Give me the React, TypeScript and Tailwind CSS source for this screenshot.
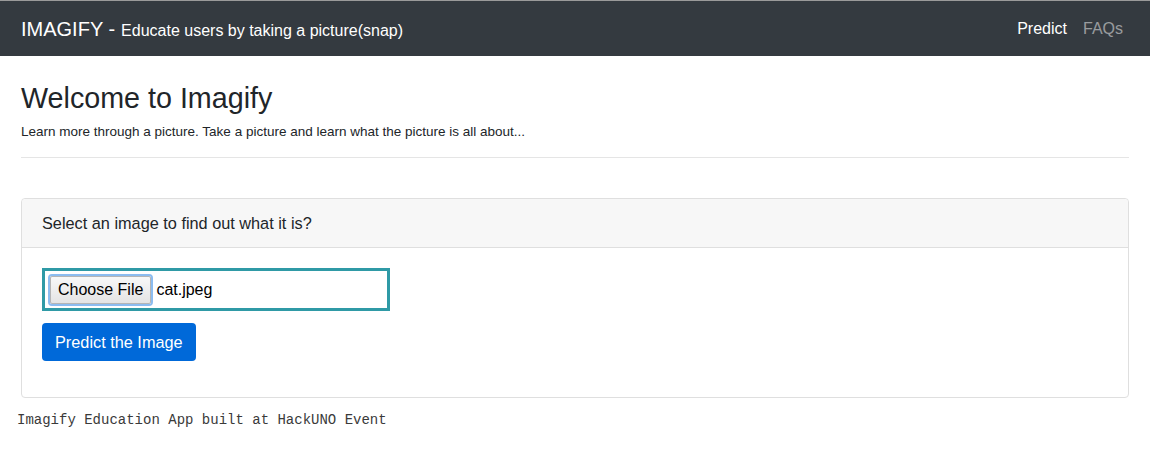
import React from 'react';

const sans = { fontFamily: '"Liberation Sans", Arial, sans-serif' };

const Navbar: React.FC = () => (
  <nav className="flex h-[56px] items-center justify-between bg-[#343a40] border-t border-[#9a9a9a] px-[21px]">
    <div className="flex items-baseline text-white">
      <span className="text-[20px] leading-none">IMAGIFY -</span>
      <span className="ml-[6px] text-[16px] leading-none">Educate users by taking a picture(snap)</span>
    </div>
    <div className="flex items-center gap-[16px] pr-[6px] text-[16px]">
      <span className="text-white">Predict</span>
      <span className="text-white/50">FAQs</span>
    </div>
  </nav>
);

export default function App() {
  return (
    <div className="min-h-[453px] bg-white text-[#212529]" style={sans}>
      <Navbar />
      <main className="px-[21px] pt-[25px]">
        <h3 className="text-[28.7px] leading-[34px] font-normal">Welcome to Imagify</h3>
        <p className="mt-[9px] text-[13.5px] leading-[16px]">
          Learn more through a picture. Take a picture and learn what the picture is all about...
        </p>
        <hr className="mt-[17px] border-t border-black/10" />
        <div className="mt-[40px] rounded-[4px] border border-[#dfdfdf]">
          <div className="h-[49px] flex items-center border-b border-[#dfdfdf] bg-[#f7f7f7] px-[20px] text-[16.3px] rounded-t-[4px]">
            Select an image to find out what it is?
          </div>
          <div className="p-[20px]">
            <div className="flex h-[43px] w-[348px] items-center border-[3px] border-[#2f9aa6] pl-[3px]">
              <div className="rounded-[4px] border-2 border-[#8cbcf0]">
                <button className="h-[28px] border border-[#b5b5b5] bg-gradient-to-b from-[#f8f8f8] to-[#e4e4e4] px-[7px] text-[16px] text-black rounded-[2px]">
                  Choose File
                </button>
              </div>
              <span className="ml-[3px] text-[16px] text-black">cat.jpeg</span>
            </div>
            <button className="mt-[12px] mb-[16px] h-[38px] rounded-[4px] bg-[#0069d9] px-[13px] text-[16.3px] text-white">
              Predict the Image
            </button>
          </div>
        </div>
      </main>
      <footer
        className="px-[17px] pt-[12px] text-[14px] text-[#3a3a3a]"
        style={{ fontFamily: '"Liberation Mono", "Courier New", monospace' }}
      >
        Imagify Education App built at HackUNO Event
      </footer>
    </div>
  );
}
